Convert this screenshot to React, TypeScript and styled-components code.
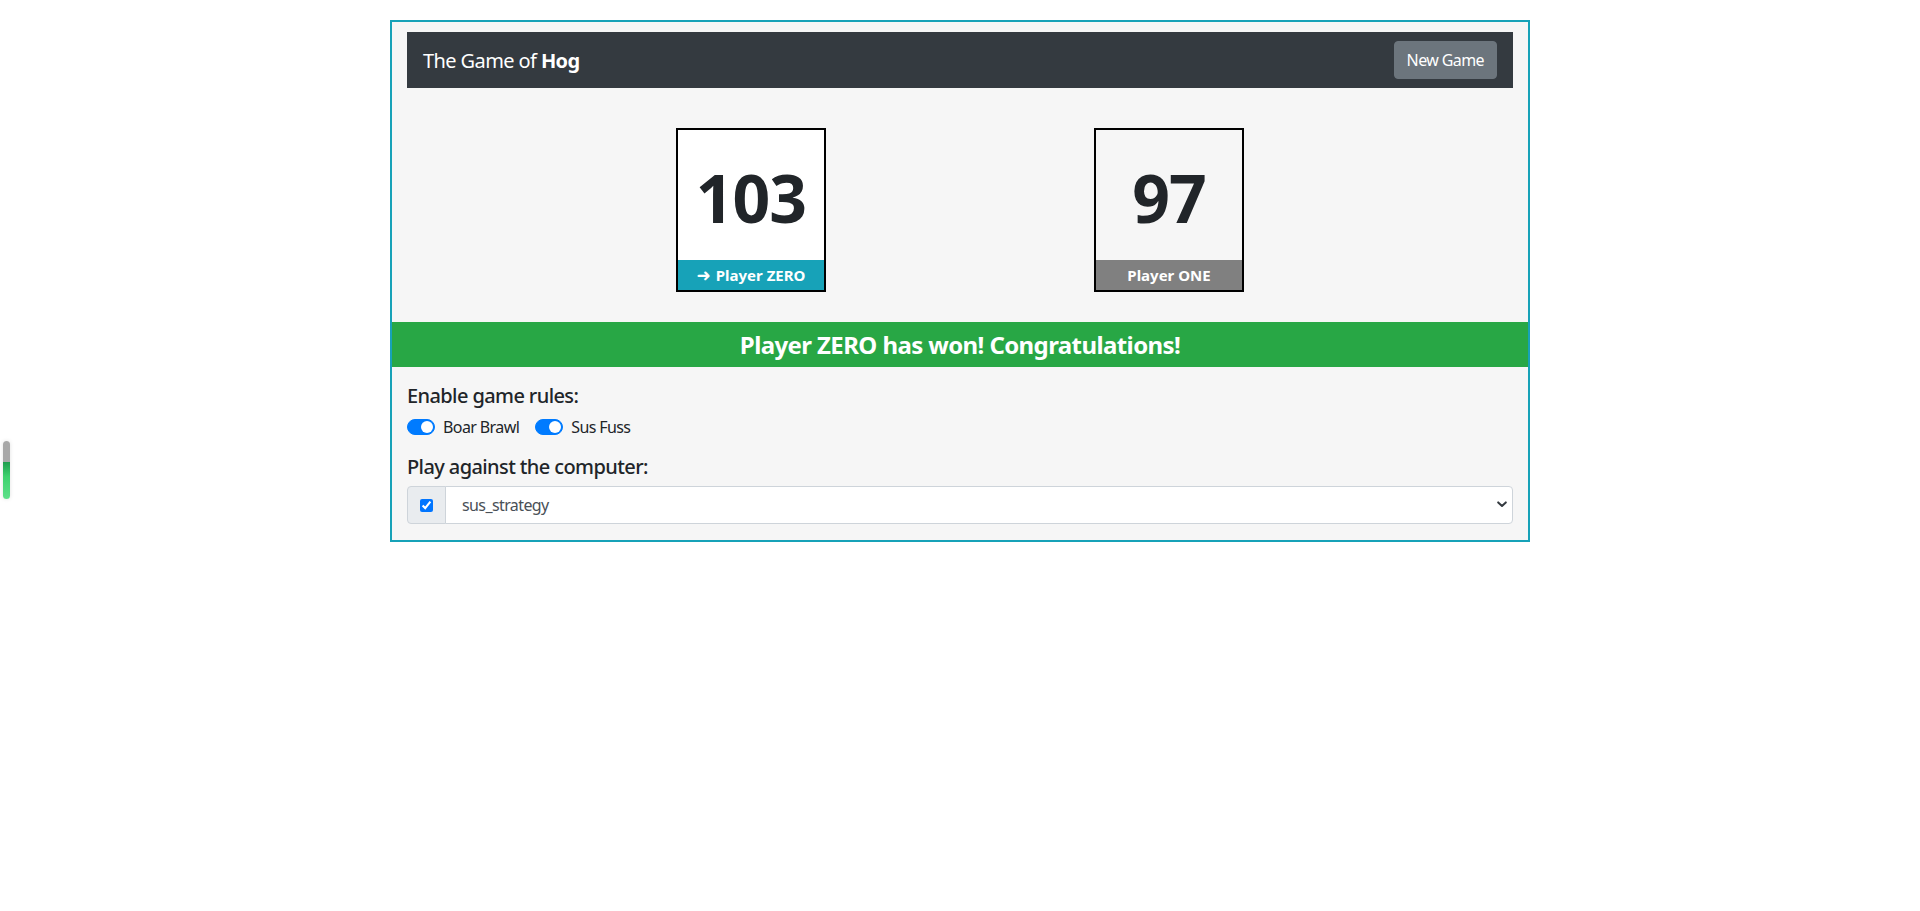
import React from "react";
import styled, { createGlobalStyle } from "styled-components";

const Global = createGlobalStyle`
  html, body {
    margin: 0;
    padding: 0;
    background: #ffffff;
  }
  body {
    font-family: "Noto Sans", "Open Sans", sans-serif;
    color: #212529;
    font-size: 16px;
    line-height: 1.5;
    letter-spacing: -0.6px;
  }
  * { box-sizing: border-box; }
`;

const Page = styled.div`
  padding-top: 20px;
`;

const Container = styled.div`
  width: 1140px;
  margin: 0 auto;
  border: 2px solid #17a2b8;
  background: #f6f6f6;
  padding: 10px 15px 16px;
`;

const Navbar = styled.nav`
  height: 56px;
  background: #343a40;
  display: flex;
  align-items: center;
  justify-content: space-between;
  padding: 0 16px;
`;

const Brand = styled.div`
  color: #ffffff;
  font-size: 20px;
  line-height: 30px;
  padding-top: 2px;
  b { font-weight: 700; }
`;

const Button = styled.button`
  height: 38px;
  padding: 0 12px;
  border: 1px solid #6c757d;
  border-radius: 4px;
  background: #6c757d;
  color: #ffffff;
  font-family: inherit;
  font-size: 16px;
  letter-spacing: -0.6px;
  line-height: 1.5;
  cursor: pointer;
`;

const ScoreRow = styled.div`
  margin-top: 40px;
  display: flex;
  justify-content: center;
  gap: 268px;
`;

const ScoreBox = styled.div<{ $bg: string }>`
  width: 150px;
  height: 164px;
  border: 2px solid #000000;
  background: ${(p) => p.$bg};
  display: flex;
  flex-direction: column;
`;

const ScoreValue = styled.div`
  flex: 1;
  display: flex;
  align-items: center;
  justify-content: center;
  padding-top: 4px;
  font-size: 66px;
  font-weight: 700;
  letter-spacing: -1px;
  color: #212529;
  line-height: 1;
`;

const ScoreLabel = styled.div<{ $bg: string }>`
  height: 30px;
  background: ${(p) => p.$bg};
  color: #ffffff;
  font-size: 15px;
  font-weight: 700;
  letter-spacing: 0;
  display: flex;
  align-items: center;
  justify-content: center;
  gap: 5px;
`;

const Arrow = styled.span`
  font-family: "DejaVu Sans", sans-serif;
  font-size: 17px;
  font-weight: 700;
  line-height: 1;
`;

const Banner = styled.div`
  margin: 30px -15px 0;
  height: 45px;
  background: #28a745;
  color: #ffffff;
  font-size: 24px;
  font-weight: 700;
  display: flex;
  align-items: center;
  justify-content: center;
  padding-top: 1px;
`;

const SectionTitle = styled.h5<{ $top: number }>`
  margin: ${(p) => p.$top}px 0 7px;
  font-size: 20px;
  font-weight: 500;
  line-height: 24px;
`;

const SwitchRow = styled.div`
  display: flex;
  height: 24px;
  align-items: center;
  gap: 16px;
`;

const SwitchItem = styled.label`
  display: inline-flex;
  align-items: center;
  gap: 8px;
  font-size: 16px;
  cursor: pointer;
`;

const Track = styled.span<{ $on: boolean }>`
  position: relative;
  width: 28px;
  height: 16px;
  border-radius: 8px;
  background: ${(p) => (p.$on ? "#007bff" : "#ffffff")};
  border: 1px solid ${(p) => (p.$on ? "#007bff" : "#adb5bd")};
`;

const Knob = styled.span<{ $on: boolean }>`
  position: absolute;
  top: 1px;
  left: ${(p) => (p.$on ? "13px" : "1px")};
  width: 12px;
  height: 12px;
  border-radius: 50%;
  background: ${(p) => (p.$on ? "#ffffff" : "#adb5bd")};
`;

const InputGroup = styled.div`
  display: flex;
  height: 38px;
`;

const Prepend = styled.div`
  width: 39px;
  display: flex;
  align-items: center;
  justify-content: center;
  background: #e9ecef;
  border: 1px solid #ced4da;
  border-radius: 4px 0 0 4px;
  input {
    margin: 0;
    width: 13px;
    height: 13px;
  }
`;

const SelectWrap = styled.div`
  position: relative;
  flex: 1;
  margin-left: -1px;
`;

const Select = styled.select`
  appearance: none;
  width: 100%;
  height: 38px;
  padding: 0 30px 0 16px;
  border: 1px solid #ced4da;
  border-radius: 0 4px 4px 0;
  background: #ffffff;
  color: #495057;
  font-family: inherit;
  font-size: 16px;
  letter-spacing: -0.6px;
`;

const Chevron = styled.svg`
  position: absolute;
  right: 6px;
  top: 15px;
  pointer-events: none;
`;

const ScrollPill = styled.div`
  position: fixed;
  left: 3px;
  top: 441px;
  width: 7px;
  height: 58px;
  border-radius: 4px;
  overflow: hidden;
  display: flex;
  flex-direction: column;
  box-shadow: 0 0 4px rgba(0, 0, 0, 0.12);
`;

const PillTop = styled.div`
  height: 21px;
  background: #a8a8a8;
`;

const PillBottom = styled.div`
  flex: 1;
  background: linear-gradient(#1f9d4e, #3fd26f 40%, #5ee08a);
`;

const players = [
  { score: 103, name: "Player ZERO", active: true, boxBg: "#ffffff", labelBg: "#17a2b8" },
  { score: 97, name: "Player ONE", active: false, boxBg: "transparent", labelBg: "#808080" },
];

const rules = [
  { name: "Boar Brawl", on: true },
  { name: "Sus Fuss", on: true },
];

export default function App() {
  return (
    <>
      <Global />
      <ScrollPill>
        <PillTop />
        <PillBottom />
      </ScrollPill>
      <Page>
        <Container>
          <Navbar>
            <Brand>
              The Game of <b>Hog</b>
            </Brand>
            <Button type="button">New Game</Button>
          </Navbar>
          <ScoreRow>
            {players.map((p) => (
              <ScoreBox key={p.name} $bg={p.boxBg}>
                <ScoreValue>{p.score}</ScoreValue>
                <ScoreLabel $bg={p.labelBg}>
                  {p.active && <Arrow>➜</Arrow>}
                  {p.name}
                </ScoreLabel>
              </ScoreBox>
            ))}
          </ScoreRow>
          <Banner>Player ZERO has won! Congratulations!</Banner>
          <SectionTitle $top={17}>Enable game rules:</SectionTitle>
          <SwitchRow>
            {rules.map((r) => (
              <SwitchItem key={r.name}>
                <Track $on={r.on}>
                  <Knob $on={r.on} />
                </Track>
                {r.name}
              </SwitchItem>
            ))}
          </SwitchRow>
          <SectionTitle $top={16}>Play against the computer:</SectionTitle>
          <InputGroup>
            <Prepend>
              <input type="checkbox" defaultChecked />
            </Prepend>
            <SelectWrap>
              <Select defaultValue="sus_strategy">
                <option value="sus_strategy">sus_strategy</option>
                <option value="always_roll">always_roll</option>
                <option value="final_strategy">final_strategy</option>
              </Select>
              <Chevron width="10" height="7" viewBox="0 0 10 7">
                <path d="M1.2 1.4 L5 5 L8.8 1.4" fill="none" stroke="#343a40" strokeWidth="2" strokeLinecap="round" strokeLinejoin="round" />
              </Chevron>
            </SelectWrap>
          </InputGroup>
        </Container>
      </Page>
    </>
  );
}
